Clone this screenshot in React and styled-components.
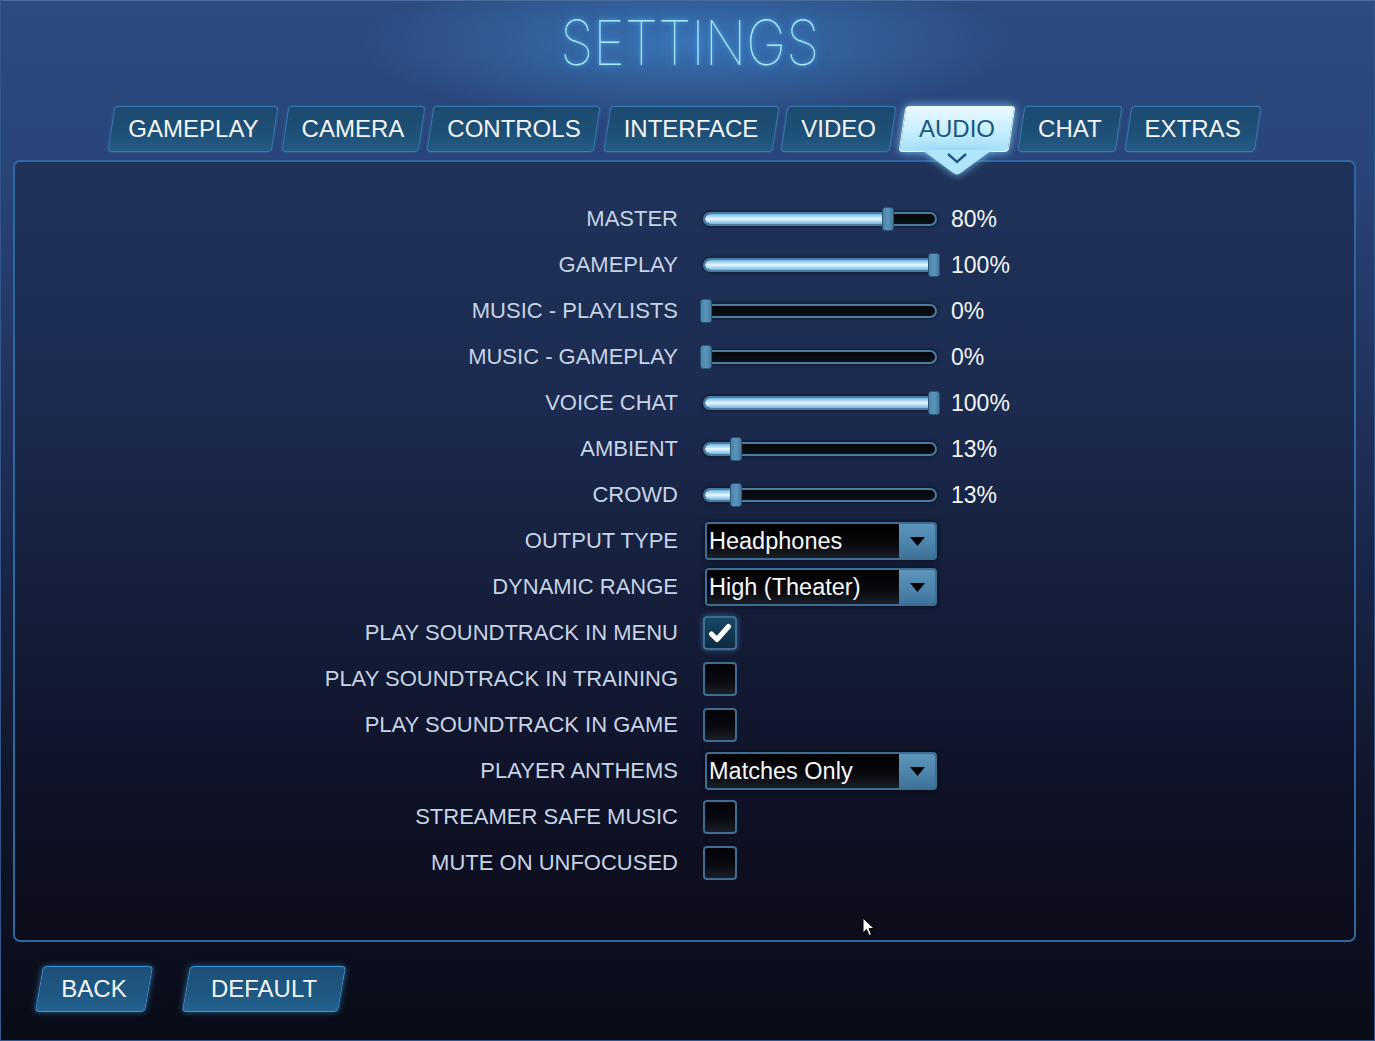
import React from 'react'
import styled, { createGlobalStyle, css } from 'styled-components'

const GlobalStyle = createGlobalStyle`
  html, body {
    margin: 0;
    padding: 0;
    background: #090b17;
  }
  * { box-sizing: border-box; }
`

const tabs = ['GAMEPLAY', 'CAMERA', 'CONTROLS', 'INTERFACE', 'VIDEO', 'AUDIO', 'CHAT', 'EXTRAS']

const rows = [
  { label: 'MASTER', type: 'slider', value: 80 },
  { label: 'GAMEPLAY', type: 'slider', value: 100 },
  { label: 'MUSIC - PLAYLISTS', type: 'slider', value: 0 },
  { label: 'MUSIC - GAMEPLAY', type: 'slider', value: 0 },
  { label: 'VOICE CHAT', type: 'slider', value: 100 },
  { label: 'AMBIENT', type: 'slider', value: 13 },
  { label: 'CROWD', type: 'slider', value: 13 },
  { label: 'OUTPUT TYPE', type: 'select', value: 'Headphones' },
  { label: 'DYNAMIC RANGE', type: 'select', value: 'High (Theater)' },
  { label: 'PLAY SOUNDTRACK IN MENU', type: 'check', value: true },
  { label: 'PLAY SOUNDTRACK IN TRAINING', type: 'check', value: false },
  { label: 'PLAY SOUNDTRACK IN GAME', type: 'check', value: false },
  { label: 'PLAYER ANTHEMS', type: 'select', value: 'Matches Only' },
  { label: 'STREAMER SAFE MUSIC', type: 'check', value: false },
  { label: 'MUTE ON UNFOCUSED', type: 'check', value: false },
]

const Slider = ({ value }) => {
  const pos = 3 + value * 2.28
  return (
    <SliderWrap>
      <Track>
        <Fill style={{ width: `${Math.max(pos - 2, 0)}px` }} />
      </Track>
      <Thumb style={{ left: `${pos}px` }} />
      <Value>{value}%</Value>
    </SliderWrap>
  )
}

const Select = ({ value }) => (
  <SelectBox>
    <SelectText>{value}</SelectText>
    <SelectButton>
      <svg width="17" height="11" viewBox="0 0 17 11">
        <path d="M1 1 L16 1 L8.5 10 Z" fill="#000" />
      </svg>
    </SelectButton>
  </SelectBox>
)

const Check = ({ checked }) => (
  <CheckBox $checked={checked}>
    {checked && (
      <svg width="24" height="22" viewBox="0 0 24 22">
        <path d="M3.5 12 L9 17.5 L20.5 4.5" fill="none" stroke="#fff" strokeWidth="5" strokeLinecap="round" strokeLinejoin="round" />
      </svg>
    )}
  </CheckBox>
)

const App = () => {
  return (
    <Frame>
      <GlobalStyle />
      <Title>SETTINGS</Title>
      <TabBar>
        {tabs.map((t) => (
          <Tab key={t} $active={t === 'AUDIO'}>
            <TabLabel>{t}</TabLabel>
            {t === 'AUDIO' && (
              <Pointer>
                <svg width="70" height="26" viewBox="0 0 70 26">
                  <path d="M0 0 L70 0 L38 23.5 Q35 25.5 32 23.5 Z" fill="#b0e5fb" />
                  <path d="M26 4 L35 12 L44 4" fill="none" stroke="#1c577f" strokeWidth="2.4" />
                </svg>
              </Pointer>
            )}
          </Tab>
        ))}
      </TabBar>
      <Panel>
        <Rows>
          {rows.map((r) => (
            <React.Fragment key={r.label}>
              <Label>{r.label}</Label>
              <Control>
                {r.type === 'slider' && <Slider value={r.value} />}
                {r.type === 'select' && <Select value={r.value} />}
                {r.type === 'check' && <Check checked={r.value} />}
              </Control>
            </React.Fragment>
          ))}
        </Rows>
      </Panel>
      <Footer>
        <FooterButton $width={110}><TabLabel>BACK</TabLabel></FooterButton>
        <FooterButton $width={156}><TabLabel>DEFAULT</TabLabel></FooterButton>
      </Footer>
      <Cursor>
        <svg width="13" height="20" viewBox="0 0 13 20">
          <path d="M1 1 L1 16 L4.5 12.5 L7 18.5 L9.5 17.5 L7 11.5 L12 11.5 Z" fill="#fff" stroke="#000" strokeWidth="1" />
        </svg>
      </Cursor>
    </Frame>
  )
}

const Frame = styled.div`
  position: relative;
  width: 1375px;
  height: 1041px;
  border: 1px solid #34578a;
  border-top-color: #4a6d9e;
  padding: 0 18px 0 12px;
  display: flex;
  flex-direction: column;
  overflow: hidden;
  background:
    radial-gradient(ellipse 330px 80px at 50% 42px, rgba(70, 150, 225, 0.55), rgba(70, 150, 225, 0) 100%),
    linear-gradient(180deg, #2c4b80 0%, #29457a 15%, #1d2d55 45%, #11162c 75%, #090b17 100%);
  font-family: "Liberation Sans", Arial, sans-serif;
`

const Title = styled.h1`
  margin: 0;
  height: 84px;
  line-height: 84px;
  padding-left: 12px;
  text-align: center;
  font-family: Inter, "DejaVu Sans", sans-serif;
  font-weight: 100;
  font-size: 62px;
  color: #a9ecff;
  text-shadow: 0 0 5px rgba(90, 190, 255, 0.9), 0 0 14px rgba(60, 150, 240, 0.6);
  transform: scaleX(0.87);
`

const TabBar = styled.div`
  margin-top: 21px;
  height: 46px;
  display: flex;
  justify-content: center;
  gap: 9px;
  position: relative;
  z-index: 2;
`

const skewed = css`
  &::before {
    content: '';
    position: absolute;
    inset: 0;
    transform: skewX(-8.6deg);
    border-radius: 4px;
    z-index: -1;
  }
`

const Tab = styled.div`
  position: relative;
  z-index: 1;
  height: 46px;
  padding: 0 17px;
  display: flex;
  align-items: center;
  font-size: 24px;
  color: ${(p) => (p.$active ? '#1b5681' : '#f2f6fa')};
  ${skewed}
  &::before {
    border: 1.5px solid ${(p) => (p.$active ? '#e8fbff' : '#3a78ad')};
    background: ${(p) =>
      p.$active
        ? 'linear-gradient(180deg, #e9faff 0%, #c9efff 50%, #a7e0f9 100%)'
        : 'linear-gradient(180deg, #1d4a6f 0%, #1e4f76 55%, #235a83 100%)'};
    box-shadow: ${(p) =>
      p.$active ? '0 0 10px rgba(130, 210, 255, 0.9)' : '0 0 3px rgba(60, 130, 200, 0.5)'};
  }
`

const TabLabel = styled.span`
  position: relative;
  line-height: 1;
  white-space: nowrap;
`

const Pointer = styled.div`
  position: absolute;
  left: 50%;
  top: 44px;
  transform: translateX(-50%);
  line-height: 0;
  filter: drop-shadow(0 0 4px rgba(130, 210, 255, 0.9));
`

const Panel = styled.div`
  position: relative;
  z-index: 1;
  margin-top: 8px;
  height: 782px;
  border: 2px solid #2f67a3;
  border-radius: 7px;
  background: linear-gradient(180deg, #1f335a 0%, #1c2b50 30%, #141c38 60%, #0e1024 85%, #0d0c1a 100%);
  padding-top: 34px;
`

const Rows = styled.div`
  display: grid;
  grid-template-columns: 663px auto;
  grid-auto-rows: 46px;
  column-gap: 25px;
`

const Label = styled.div`
  display: flex;
  align-items: center;
  justify-content: flex-end;
  font-size: 22px;
  color: #c7d3e6;
  white-space: nowrap;
`

const Control = styled.div`
  display: flex;
  align-items: center;
`

const SliderWrap = styled.div`
  position: relative;
  display: flex;
  align-items: center;
  gap: 14px;
`

const Track = styled.div`
  position: relative;
  width: 234px;
  height: 14px;
  border: 2px solid #4b7b9f;
  border-radius: 7px;
  background: linear-gradient(180deg, #04060a 0%, #0b1118 100%);
  box-shadow: 0 0 4px rgba(0, 0, 0, 0.6);
  overflow: hidden;
`

const Fill = styled.div`
  height: 100%;
  border-radius: 5px 0 0 5px;
  background: linear-gradient(180deg, #6fb7e8 0%, #eaf8ff 50%, #6fb5e6 100%);
  box-shadow: 0 0 6px rgba(130, 200, 255, 0.8);
`

const Thumb = styled.div`
  position: absolute;
  top: 50%;
  width: 12px;
  height: 24px;
  transform: translate(-50%, -50%);
  border-radius: 3px;
  border: 1px solid #2c5878;
  background: linear-gradient(90deg, #4b84a9 0%, #5d95ba 50%, #447aa0 100%);
`

const Value = styled.span`
  font-size: 23px;
  color: #f4f7fa;
`

const SelectBox = styled.div`
  margin-left: 2px;
  width: 232px;
  height: 38px;
  display: flex;
  border: 2px solid #3e6e93;
  border-radius: 4px;
  overflow: hidden;
  box-shadow: 0 0 6px rgba(0, 0, 0, 0.6);
`

const SelectText = styled.div`
  flex: 1;
  display: flex;
  align-items: center;
  padding-left: 2px;
  font-size: 23.5px;
  color: #f6f8fa;
  background: linear-gradient(180deg, #000 0%, #07090d 60%, #1a1f27 100%);
`

const SelectButton = styled.div`
  width: 36px;
  display: flex;
  align-items: center;
  justify-content: center;
  background: linear-gradient(180deg, #5b93b9 0%, #4c83aa 60%, #3e729a 100%);
`

const CheckBox = styled.div`
  width: 34px;
  height: 34px;
  display: flex;
  align-items: center;
  justify-content: center;
  border: 2px solid #3f6d92;
  border-radius: 4px;
  background: ${(p) =>
    p.$checked
      ? 'linear-gradient(180deg, #184766 0%, #0e2a40 100%)'
      : 'linear-gradient(180deg, #020306 0%, #080a10 55%, #1b1e26 100%)'};
  box-shadow: ${(p) => (p.$checked ? '0 0 6px rgba(80, 170, 230, 0.5)' : 'none')};
`

const Footer = styled.div`
  margin-top: 24px;
  padding-left: 26px;
  display: flex;
  gap: 37px;
`

const FooterButton = styled.div`
  position: relative;
  z-index: 1;
  width: ${(p) => p.$width}px;
  height: 46px;
  display: flex;
  align-items: center;
  justify-content: center;
  font-size: 24px;
  color: #f2f6fa;
  ${skewed}
  &::before {
    transform: skewX(-10deg);
    border: 1.5px solid #3f92d2;
    background: linear-gradient(180deg, #1d5078 0%, #1f5680 55%, #246290 100%);
    box-shadow: 0 0 6px rgba(70, 160, 230, 0.6);
  }
`

const Cursor = styled.div`
  position: absolute;
  left: 861px;
  top: 916px;
  line-height: 0;
  z-index: 5;
`

export default App
